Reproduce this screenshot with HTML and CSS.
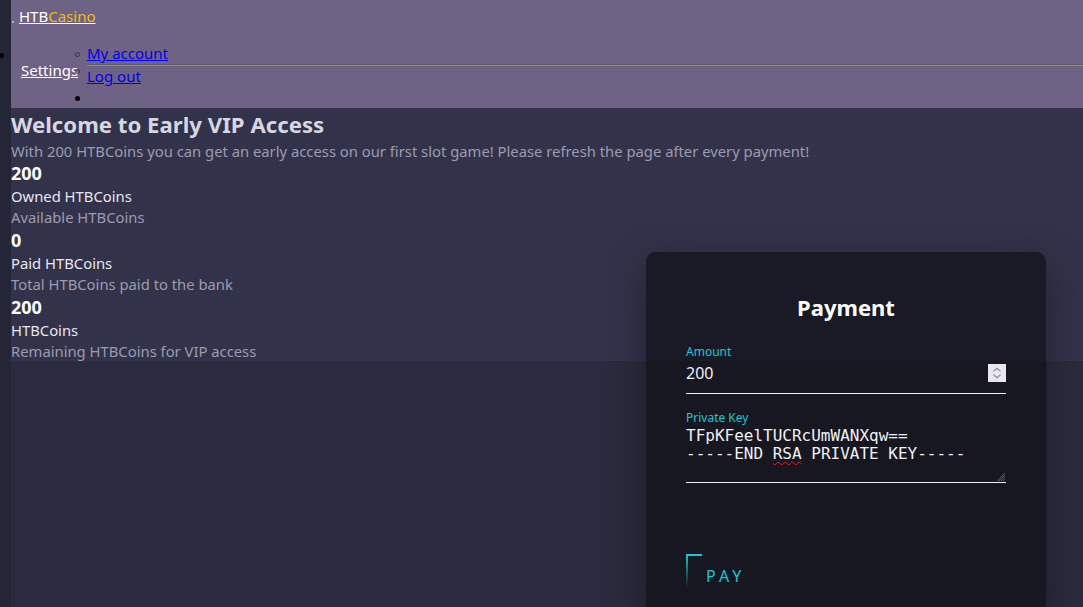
FILE: index.html
```html
<!DOCTYPE html>
<html lang="en">
<head>
<meta charset="utf-8">
<title>HTBCasino - Early VIP Access</title>
<link rel="stylesheet" href="styles.css">
</head>
<body>
<div class="layout">
  <div class="rail"></div>
  <div class="page">
    <div class="top">
      <nav class="nav">
        <div class="brand-row">
          <span class="brand-dot"></span>
          <a class="brand" href="#">HTB<span class="gold">Casino</span></a>
        </div>
        <ul class="menu">
          <li class="menu-item">
            <span class="mark disc outer"></span>
            <a class="settings" href="#">Settings</a>
            <ul class="submenu">
              <li class="sub-item"><span class="mark circle"></span><a href="#" class="sub-link">My account</a></li>
              <li class="sub-divider"><span class="mark circle"></span><hr class="rule"></li>
              <li class="sub-item"><span class="mark blank"></span><a href="#" class="sub-link">Log out</a></li>
              <li class="sub-item"><span class="mark disc"></span></li>
            </ul>
          </li>
        </ul>
      </nav>
      <section class="hero">
        <div class="intro">
          <h1 class="title">Welcome to Early VIP Access</h1>
          <p class="lead">With 200 HTBCoins you can get an early access on our first slot game! Please refresh the page after every payment!</p>
          <div class="stat">
            <div class="stat-value">200</div>
            <div class="stat-label">Owned HTBCoins</div>
            <div class="stat-desc">Available HTBCoins</div>
          </div>
          <div class="stat">
            <div class="stat-value">0</div>
            <div class="stat-label">Paid HTBCoins</div>
            <div class="stat-desc">Total HTBCoins paid to the bank</div>
          </div>
          <div class="stat">
            <div class="stat-value">200</div>
            <div class="stat-label">HTBCoins</div>
            <div class="stat-desc">Remaining HTBCoins for VIP access</div>
          </div>
        </div>
        <div class="card-col">
          <form class="card">
            <h2 class="card-title">Payment</h2>
            <div class="field">
              <label class="field-label">Amount</label>
              <div class="amount">
                <span class="amount-value">200</span>
                <span class="spinner">
                  <svg width="18" height="18" viewBox="0 0 18 18"><path d="M5.5 7.2 L9 4.2 L12.5 7.2" fill="none" stroke="#8d8b98" stroke-width="1.2"/><path d="M5.5 10.8 L9 13.8 L12.5 10.8" fill="none" stroke="#8d8b98" stroke-width="1.2"/></svg>
                </span>
              </div>
            </div>
            <div class="field key-field">
              <label class="field-label">Private Key</label>
              <div class="keybox">
                <div class="key-line">TFpKFeelTUCRcUmWANXqw==</div>
                <div class="key-line">-----END <span class="misspelled">RSA</span> PRIVATE KEY-----</div>
                <div class="key-line">&nbsp;</div>
                <svg class="grip" width="11" height="11" viewBox="0 0 11 11"><path d="M10 2 L2 10 M10 4 L4 10 M10 6 L6 10 M10 8 L8 10" stroke="#6d6d78" stroke-width="0.8"/></svg>
              </div>
            </div>
            <button type="button" class="pay">PAY</button>
          </form>
        </div>
      </section>
    </div>
  </div>
</div>
</body>
</html>
```

FILE: styles.css
```css
html, body {
  margin: 0;
  padding: 0;
  overflow: hidden;
}

body {
  background: #2a2b3e;
  font-family: "Noto Sans", "Open Sans", sans-serif;
  font-size: 15px;
  line-height: 21px;
}

.layout {
  display: flex;
  min-height: 100vh;
}

.rail {
  width: 11px;
  flex: none;
  background: #252538;
}

.page {
  flex: 1;
  min-width: 0;
}

.top {
  background: #32334a;
}

/* ---------- nav ---------- */
.nav {
  height: 108px;
  box-sizing: border-box;
  padding-top: 6px;
  background: #6e6384;
}

.brand-row {
  display: flex;
  align-items: flex-start;
  height: 21px;
}

.brand-dot {
  width: 2px;
  height: 2px;
  margin-top: 15px;
  margin-left: 1px;
  background: #b8b3c4;
}

.brand {
  margin-left: 5px;
  color: #ffffff;
  text-decoration: underline;
}

.gold {
  color: #f6b812;
}

.menu {
  list-style: none;
  margin: 16px 0 0 -12px;
  padding: 0;
}

.menu-item {
  display: grid;
  grid-template-columns: 22px 54px 1fr;
  align-items: start;
}

.mark {
  display: block;
  width: 5px;
  height: 5px;
  border-radius: 50%;
  box-sizing: border-box;
  margin-top: 10px;
}

.disc {
  background: #000;
}

.circle {
  border: 1px solid #3a3540;
}

.blank {
  visibility: hidden;
}

.settings {
  margin-top: 17px;
  color: #ffffff;
  text-decoration: underline;
  white-space: nowrap;
}

.submenu {
  list-style: none;
  margin: 0;
  padding: 0;
}

.sub-item {
  display: grid;
  grid-template-columns: 12px 1fr;
  align-items: start;
  min-height: 21px;
}

.sub-item .mark {
  margin-top: 9px;
}

.sub-link {
  color: #0000ee;
  text-decoration: underline;
}

.sub-divider {
  display: grid;
  grid-template-columns: 12px 1fr;
  align-items: start;
  height: 2px;
}

.sub-divider .mark {
  margin-top: 5px;
}

.rule {
  margin: 0;
  height: 0;
  border: 0;
  border-top: 1px solid #5e5e5e;
  border-bottom: 1px solid #8e8e8e;
}

/* ---------- hero ---------- */
.hero {
  display: flex;
  justify-content: space-between;
  align-items: flex-start;
  height: 253px;
}

.intro {
  min-width: 0;
  font-size: 14.8px;
}

.title {
  margin: 0;
  font-size: 22.2px;
  line-height: 33px;
  font-weight: 700;
  color: #d7d7e1;
}

.lead {
  margin: 0;
  line-height: 20px;
  color: #9b9bb0;
  white-space: nowrap;
}

.stat-value {
  font-size: 18px;
  line-height: 25px;
  font-weight: 700;
  color: #ffffff;
}

.stat-label {
  color: #e6e6ee;
}

.stat-desc {
  color: #9b9bb0;
}

/* ---------- card ---------- */
.card-col {
  flex: none;
  padding-top: 144px;
  padding-right: 37px;
}

.card {
  width: 400px;
  box-sizing: border-box;
  padding: 40px 40px 40px;
  border-radius: 9px;
  background: rgba(12, 12, 18, 0.64);
  box-shadow: 0 10px 40px rgba(0, 0, 0, 0.35);
}

.card-title {
  margin: 0;
  text-align: center;
  font-size: 22px;
  line-height: 30px;
  font-weight: 700;
  color: #ffffff;
}

.field {
  margin-top: 22px;
}

.key-field {
  margin-top: 16px;
}

.field-label {
  display: block;
  font-size: 12px;
  line-height: 16px;
  color: #19c6d2;
}

.amount {
  display: flex;
  align-items: center;
  justify-content: space-between;
  padding: 2px 0 9px;
  border-bottom: 1px solid #f0f0f4;
}

.amount-value {
  font-size: 16px;
  line-height: 22px;
  color: #f0f0f4;
}

.spinner {
  display: block;
  width: 18px;
  height: 18px;
  background: #e9e7ee;
}

.spinner svg {
  display: block;
}

.keybox {
  position: relative;
  padding: 1px 0;
  border-bottom: 1px solid #f0f0f4;
  font-family: "DejaVu Sans Mono", monospace;
  font-size: 16px;
  line-height: 18px;
  color: #f0f0f4;
}

.key-line {
  height: 18px;
  white-space: nowrap;
}

.misspelled {
  text-decoration: underline wavy #e0201c;
  text-decoration-thickness: 1px;
  text-underline-offset: 2px;
}

.grip {
  position: absolute;
  right: 0;
  bottom: 0;
}

.pay {
  display: block;
  margin-top: 71px;
  height: 33px;
  padding: 10px 0 0 20px;
  border: 0;
  background:
    linear-gradient(#19c6d2, #19c6d2) no-repeat 0 0 / 16px 2px,
    linear-gradient(#19c6d2, rgba(25, 198, 210, 0)) no-repeat 0 0 / 2px 100%;
  font-family: "Noto Sans", sans-serif;
  font-size: 16px;
  line-height: 20px;
  letter-spacing: 4px;
  color: #19c6d2;
  text-align: left;
  cursor: pointer;
}
```
